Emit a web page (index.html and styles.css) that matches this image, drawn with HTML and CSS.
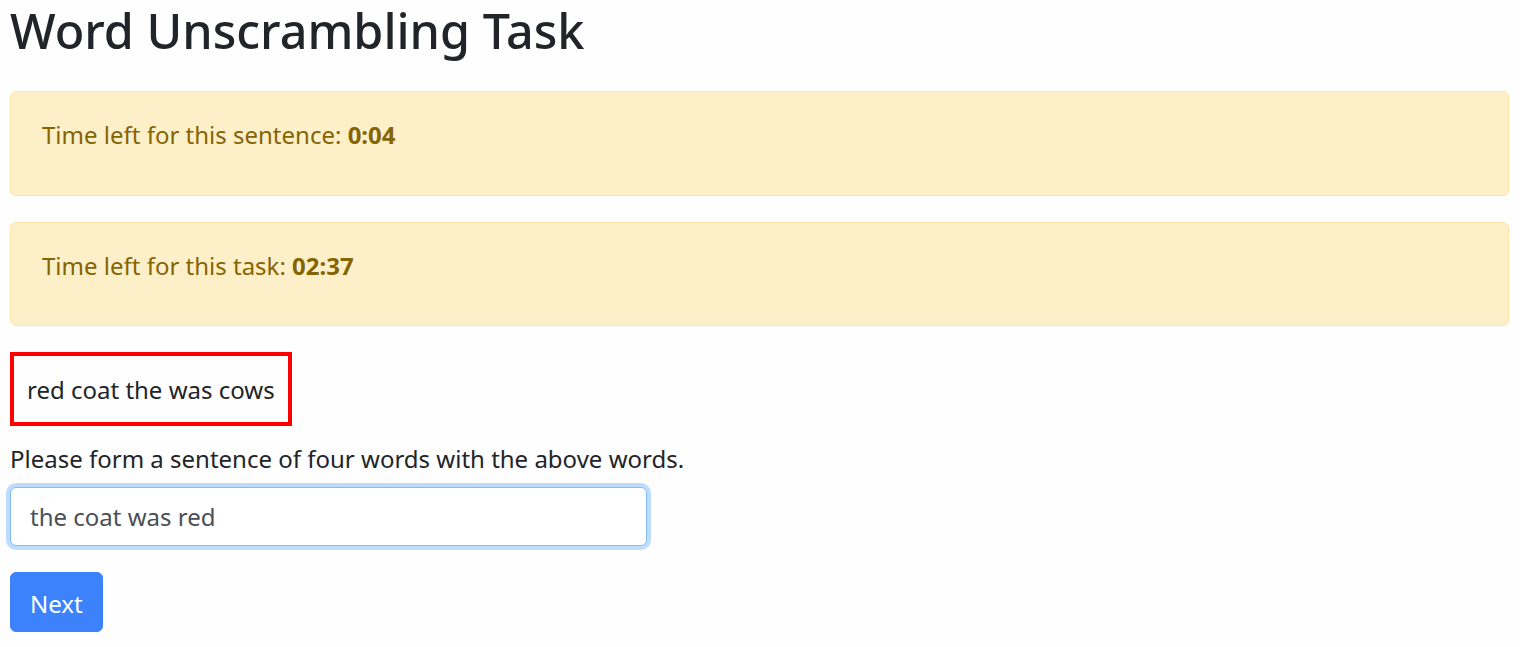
FILE: index.html
```html
<!DOCTYPE html>
<html lang="en">
<head>
<meta charset="utf-8">
<title>Word Unscrambling Task</title>
<link rel="stylesheet" href="styles.css">
</head>
<body>
<main class="page">
  <h1 class="title">Word Unscrambling Task</h1>
  <div class="alert">
    <p class="alert-text">Time left for this sentence: <b>0:04</b></p>
  </div>
  <div class="alert">
    <p class="alert-text">Time left for this task: <b>02:37</b></p>
  </div>
  <div class="scramble">red coat the was cows</div>
  <form class="form">
    <label class="label" for="answer">Please form a sentence of four words with the above words.</label>
    <input class="input" id="answer" type="text" value="the coat was red">
    <button class="btn" type="button">Next</button>
  </form>
</main>
</body>
</html>
```
FILE: styles.css
```css
html, body {
  margin: 0;
  padding: 0;
  background: #fefefe;
}
body {
  font-family: "Noto Sans", "Open Sans", sans-serif;
  font-size: 24px;
  line-height: 37.5px;
  color: #212529;
}
.page {
  padding: 0 11px 0 10px;
}
.title {
  margin: 0 0 31px 0;
  font-size: 48.5px;
  line-height: 60px;
  font-weight: 550;
  color: #212529;
  padding-top: 0;
}
.alert {
  background: #fdf0c9;
  border: 1.5px solid #fbe6a5;
  border-radius: 6px;
  color: #856404;
  padding: 24px 31px 16px;
  margin-bottom: 26px;
}
.alert-text {
  margin: 0 0 25px 0;
}
.alert-text b {
  font-weight: 700;
}
.scramble {
  display: inline-block;
  border: 4.5px solid #f00;
  padding: 15px 13px 13px;
  margin-bottom: 14px;
}
.form {
  display: flex;
  flex-direction: column;
  align-items: flex-start;
}
.label {
  display: block;
  margin-bottom: 10px;
}
.input {
  box-sizing: border-box;
  width: 637px;
  height: 59px;
  padding: 9px 19px;
  font-family: inherit;
  font-size: 24px;
  color: #495057;
  background: #fff;
  border: 1.5px solid #80bdff;
  border-radius: 6px;
  box-shadow: 0 0 0 4px rgba(0, 123, 255, 0.25);
  outline: none;
  margin-bottom: 26px;
}
.btn {
  box-sizing: border-box;
  height: 60px;
  padding: 2px 19px 0;
  font-family: inherit;
  font-size: 24px;
  color: #fff;
  background: #3b82fc;
  border: 1px solid #3b82fc;
  border-radius: 6px;
}
```
